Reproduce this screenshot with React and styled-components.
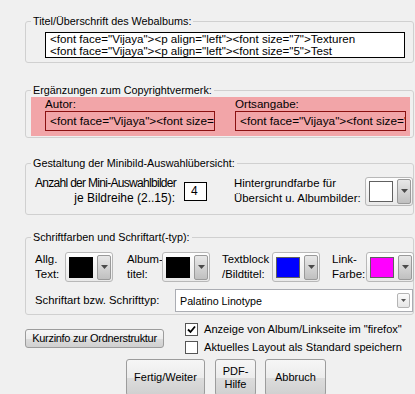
import React from 'react';
import styled, { createGlobalStyle } from 'styled-components';

const Global = createGlobalStyle`
  html, body { margin: 0; padding: 0; background: #f0f0f0; overflow: hidden; }
  body { font-family: "Liberation Sans", Arial, sans-serif; font-size: 12px; color: #000; }
`;

const Page = styled.div`
  width: 415px;
  height: 394px;
  overflow: hidden;
  box-sizing: border-box;
  padding: 14px 0 0 25px;
  display: flex;
  flex-direction: column;
`;

const Group = styled.fieldset`
  margin: ${p => p.$mt}px 0 0 0;
  padding: 0;
  min-width: 0;
  width: 389px;
  box-sizing: border-box;
  border: 1px solid #d0d0d0;
  border-radius: 3px;
`;

const Legend = styled.legend`
  margin-left: 5px;
  padding: 0 2px;
  font-size: 10.8px;
  line-height: 14px;
`;

const Body = styled.div`
  padding: ${p => p.$pad};
`;

const TextBox = styled.div`
  width: 360px;
  height: 26px;
  box-sizing: border-box;
  border: 1px solid #000;
  background: #fff;
  padding: 0 4px;
  font-size: 11.6px;
  line-height: 12px;
  white-space: nowrap;
  overflow: hidden;
`;

const Pink = styled.div`
  margin: 0 3px 1px 5px;
  padding: 0 5px 5px 14px;
  background: #f2a5a8;
  display: grid;
  grid-template-columns: 170px 171px;
  column-gap: 20px;
`;

const FieldLabel = styled.div`
  font-size: 11.6px;
  line-height: 14px;
`;

const RedInput = styled.div`
  height: 20px;
  box-sizing: border-box;
  border: 1px solid #8a1010;
  padding: 0 4px;
  line-height: 18px;
  font-size: 11.8px;
  white-space: nowrap;
  overflow: hidden;
`;

const Row = styled.div`
  display: flex;
  align-items: center;
  margin-top: ${p => p.$mt || 0}px;
`;

const Label = styled.div`
  width: ${p => p.$w}px;
  margin-left: ${p => p.$ml || 0}px;
  text-align: ${p => p.$align || 'left'};
  font-size: ${p => p.$fs || 12}px;
  line-height: 15px;
  white-space: nowrap;
  flex-shrink: 0;
`;

const TightLine = styled.div`
  text-align: left;
  letter-spacing: -0.7px;
`;

const NumBox = styled.div`
  width: 24px;
  height: 19px;
  margin-left: 9px;
  box-sizing: border-box;
  border: 1px solid #000;
  background: #fff;
  padding-left: 6px;
  line-height: 17px;
  font-size: 12px;
`;

const Picker = styled.div`
  width: 48px;
  height: ${p => p.$h}px;
  margin-left: ${p => p.$ml || 0}px;
  box-sizing: border-box;
  border: 1px solid #b8b8b8;
  border-radius: 3px;
  background: linear-gradient(#fefefe, #e9e9e9);
  display: flex;
  align-items: center;
  padding: 0 1px 0 3px;
  gap: 4px;
  flex-shrink: 0;
`;

const Swatch = styled.div`
  width: 25px;
  height: 21px;
  box-sizing: border-box;
  border: 1px solid ${p => (p.$c === '#000' ? '#000' : '#606060')};
  background: ${p => p.$c};
`;

const DropBtn = styled.div`
  width: 14px;
  height: 25px;
  box-sizing: border-box;
  border: 1px solid #9a9a9a;
  border-radius: 2px;
  background: linear-gradient(#e8e8e8, #c0c0c0);
  display: flex;
  align-items: center;
  justify-content: center;
`;

const Tri = ({ w = 7, h = 4, c = '#4a4a4a' }) => (
  <svg width={w} height={h} viewBox={`0 0 ${w} ${h}`}>
    <polygon points={`0,0 ${w},0 ${w / 2},${h}`} fill={c} />
  </svg>
);

const ColorPicker = ({ c, h = 30, ml }) => (
  <Picker $h={h} $ml={ml}>
    <Swatch $c={c} />
    <DropBtn>
      <Tri />
    </DropBtn>
  </Picker>
);

const Combo = styled.div`
  width: 238px;
  height: 23px;
  box-sizing: border-box;
  border: 1px solid #abadb3;
  background: #fff;
  display: flex;
  align-items: center;
  justify-content: space-between;
  padding: 0 2px 0 4px;
  font-size: 10.7px;
  flex-shrink: 0;
`;

const SmallDrop = styled.div`
  width: 13px;
  height: 15px;
  box-sizing: border-box;
  border: 1px solid #b4b4b4;
  border-radius: 2px;
  background: linear-gradient(#fbfbfb, #e6e6e6);
  display: flex;
  align-items: center;
  justify-content: center;
`;

const Bottom = styled.div`
  display: flex;
  align-items: center;
  margin-top: 5px;
`;

const Btn = styled.div`
  width: ${p => p.$w}px;
  height: ${p => p.$h}px;
  margin-left: ${p => p.$ml || 0}px;
  box-sizing: border-box;
  border: 1px solid #9c9c9c;
  border-radius: 3px;
  background: linear-gradient(#f6f6f6 0%, #ececec 50%, #dcdcdc 51%, #d0d0d0 100%);
  display: flex;
  align-items: center;
  justify-content: center;
  text-align: center;
  font-size: 11px;
  line-height: 13px;
  letter-spacing: ${p => p.$ls || 0}px;
  white-space: nowrap;
  flex-shrink: 0;
`;

const Checks = styled.div`
  margin-left: 21px;
  display: flex;
  flex-direction: column;
`;

const CheckRow = styled.div`
  height: 18px;
  display: flex;
  align-items: center;
  font-size: 11.1px;
  white-space: nowrap;
`;

const Box = styled.div`
  width: 13px;
  height: 13px;
  box-sizing: border-box;
  border: 1px solid #555;
  background: #fff;
  margin-right: 6px;
  display: flex;
  align-items: center;
  justify-content: center;
`;

const ButtonRow = styled.div`
  display: flex;
  margin: 3px 0 0 101px;
`;

const Check = () => (
  <svg width="9" height="9" viewBox="0 0 9 9">
    <path d="M1 4.5 L3.5 7 L8 1.5" stroke="#000" strokeWidth="1.8" fill="none" />
  </svg>
);

export default function App() {
  return (
    <>
      <Global />
      <Page>
        <Group $mt={0}>
          <Legend>Titel/Überschrift des Webalbums:</Legend>
          <Body $pad="4px 0 4px 19px">
            <TextBox>
              &lt;font face="Vijaya"&gt;&lt;p align="left"&gt;&lt;font size="7"&gt;Texturen
              <br />
              &lt;font face="Vijaya"&gt;&lt;p align="left"&gt;&lt;font size="5"&gt;Test
            </TextBox>
          </Body>
        </Group>

        <Group $mt={20}>
          <Legend>Ergänzungen zum Copyrightvermerk:</Legend>
          <Pink>
            <FieldLabel>Autor:</FieldLabel>
            <FieldLabel>Ortsangabe:</FieldLabel>
            <RedInput>&lt;font face="Vijaya"&gt;&lt;font size="7"&gt;</RedInput>
            <RedInput>&lt;font face="Vijaya"&gt;&lt;font size="7"&gt;</RedInput>
          </Pink>
        </Group>

        <Group $mt={18}>
          <Legend>Gestaltung der Minibild-Auswahlübersicht:</Legend>
          <Body $pad="6px 0 8px 9px">
            <Row>
              <Label $w={140} $align="right">
                <TightLine>Anzahl der Mini-Auswahlbilder</TightLine>
                je Bildreihe (2..15):
              </Label>
              <NumBox>4</NumBox>
              <Label $w={122} $ml={27} $fs={11.4}>
                Hintergrundfarbe für
                <br />
                Übersicht u. Albumbilder:
              </Label>
              <ColorPicker c="#fff" h={29} ml={9} />
            </Row>
          </Body>
        </Group>

        <Group $mt={15}>
          <Legend>Schriftfarben und Schriftart(-typ):</Legend>
          <Body $pad="8px 0 2px 9px">
            <Row>
              <Label $w={30} $fs={11.5}>Allg.<br />Text:</Label>
              <ColorPicker c="#000" />
              <Label $w={35} $ml={14} $fs={11.3}>Album-<br />titel:</Label>
              <ColorPicker c="#000" />
              <Label $w={50} $ml={12} $fs={11.3}>Textblock<br />/Bildtitel:</Label>
              <ColorPicker c="#0000ff" />
              <Label $w={34} $ml={12} $fs={11.5}>Link-<br />Farbe:</Label>
              <ColorPicker c="#ff00ff" />
            </Row>
            <Row $mt={7}>
              <Label $w={140} $fs={11.3}>Schriftart bzw. Schrifttyp:</Label>
              <Combo>
                Palatino Linotype
                <SmallDrop>
                  <Tri w={5} h={3} c="#555" />
                </SmallDrop>
              </Combo>
            </Row>
          </Body>
        </Group>

        <Bottom>
          <Btn $w={139} $h={19} $ls={-0.3}>Kurzinfo zur Ordnerstruktur</Btn>
          <Checks>
            <CheckRow>
              <Box><Check /></Box>
              Anzeige von Album/Linkseite im "firefox"
            </CheckRow>
            <CheckRow>
              <Box />
              Aktuelles Layout als Standard speichern
            </CheckRow>
          </Checks>
        </Bottom>

        <ButtonRow>
          <Btn $w={79} $h={37}>Fertig/Weiter</Btn>
          <Btn $w={41} $h={37} $ml={10}>PDF-<br />Hilfe</Btn>
          <Btn $w={61} $h={37} $ml={9}>Abbruch</Btn>
        </ButtonRow>
      </Page>
    </>
  );
}
